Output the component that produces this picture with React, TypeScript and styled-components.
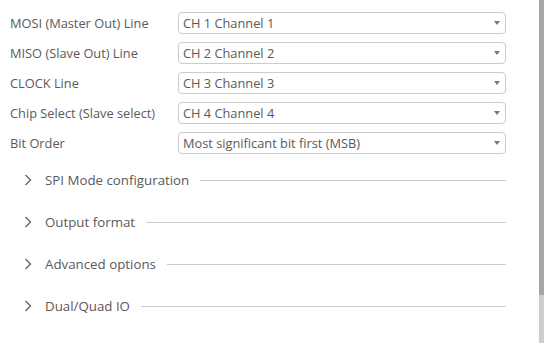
import React from 'react';
import styled, { createGlobalStyle } from 'styled-components';

const GlobalStyle = createGlobalStyle`
  html, body {
    margin: 0;
    padding: 0;
    background: #ffffff;
  }
  body {
    font-family: 'Open Sans', 'Noto Sans', sans-serif;
    font-size: 12px;
    color: #555555;
  }
`;

const Page = styled.div`
  display: flex;
  width: 550px;
  height: 350px;
  overflow: hidden;
`;

const Content = styled.div`
  flex: 1;
  display: flex;
  flex-direction: column;
  padding: 12px 0 0 10px;
  margin-right: 33px;
`;

const Form = styled.div`
  display: grid;
  grid-template-columns: 168px 1fr;
  row-gap: 8px;
  align-items: center;
`;

const Label = styled.label`
  font-size: 12.8px;
  color: #5a5a5a;
  white-space: nowrap;
`;

const Select = styled.div`
  position: relative;
  height: 20px;
  border: 1px solid #cccccc;
  border-radius: 4px;
  display: flex;
  align-items: center;
  padding-left: 4px;
  font-size: 12.8px;
  color: #5a5a5a;
  &::after {
    content: '';
    position: absolute;
    right: 5px;
    top: 8px;
    border-left: 3.5px solid transparent;
    border-right: 3.5px solid transparent;
    border-top: 4px solid #777777;
  }
`;

const Sections = styled.div`
  display: flex;
  flex-direction: column;
  margin-top: 16px;
  gap: 22px;
`;

const Section = styled.div`
  display: flex;
  align-items: center;
  height: 20px;
  padding-left: 12px;
`;

const Chevron = styled.svg`
  width: 12px;
  height: 12px;
  margin-right: 11px;
  flex: none;
`;

const SectionTitle = styled.span`
  font-size: 13.3px;
  color: #5a5a5a;
  white-space: nowrap;
`;

const Rule = styled.div`
  flex: 1;
  height: 1px;
  background: #cccccc;
  margin-left: 11px;
`;

const Scrollbar = styled.div`
  width: 5px;
  margin-right: 6px;
  height: 343px;
  display: flex;
  flex-direction: column;
  background: #cdcdcd;
`;

const Thumb = styled.div`
  height: 295px;
  background: #a6a6a6;
`;

const fields = [
  { label: 'MOSI (Master Out) Line', value: 'CH 1 Channel 1' },
  { label: 'MISO (Slave Out) Line', value: 'CH 2 Channel 2' },
  { label: 'CLOCK Line', value: 'CH 3 Channel 3' },
  { label: 'Chip Select (Slave select)', value: 'CH 4 Channel 4' },
  { label: 'Bit Order', value: 'Most significant bit first (MSB)' },
];

const sections = ['SPI Mode configuration', 'Output format', 'Advanced options', 'Dual/Quad IO'];

export default function App() {
  return (
    <Page>
      <GlobalStyle />
      <Content>
        <Form>
          {fields.map((f) => (
            <React.Fragment key={f.label}>
              <Label>{f.label}</Label>
              <Select>{f.value}</Select>
            </React.Fragment>
          ))}
        </Form>
        <Sections>
          {sections.map((s) => (
            <Section key={s}>
              <Chevron viewBox="0 0 12 12">
                <path d="M3.5 1 L8.5 6 L3.5 11" fill="none" stroke="#666666" strokeWidth="1.4" />
              </Chevron>
              <SectionTitle>{s}</SectionTitle>
              <Rule />
            </Section>
          ))}
        </Sections>
      </Content>
      <Scrollbar>
        <Thumb />
      </Scrollbar>
    </Page>
  );
}
